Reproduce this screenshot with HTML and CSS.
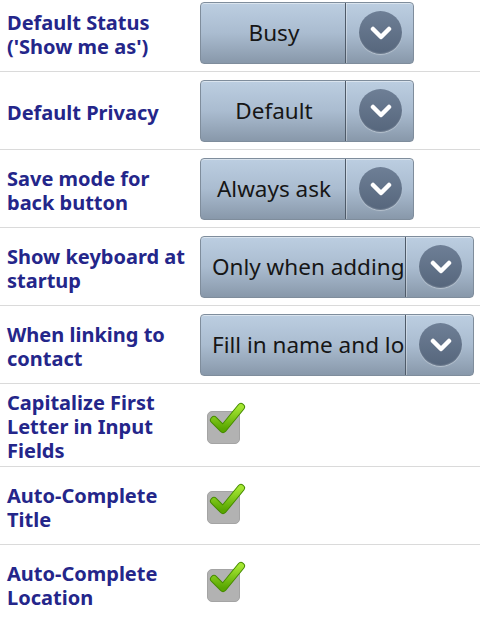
FILE: index.html
```html
<!DOCTYPE html>
<html>
<head>
<meta charset="utf-8">
<link rel="stylesheet" href="styles.css">
</head>
<body>
<div class="list">
  <div class="row">
    <div class="label">Default Status ('Show me as')</div>
    <div class="spinner">
      <div class="spinner-text">Busy</div>
      <div class="spinner-arrow"><span class="circle"><svg width="22" height="14" viewBox="0 0 22 14"><polyline points="3,3 11,11 19,3" fill="none" stroke="#fff" stroke-width="4.5" stroke-linecap="round" stroke-linejoin="round"/></svg></span></div>
    </div>
  </div>
  <div class="row">
    <div class="label">Default Privacy</div>
    <div class="spinner">
      <div class="spinner-text">Default</div>
      <div class="spinner-arrow"><span class="circle"><svg width="22" height="14" viewBox="0 0 22 14"><polyline points="3,3 11,11 19,3" fill="none" stroke="#fff" stroke-width="4.5" stroke-linecap="round" stroke-linejoin="round"/></svg></span></div>
    </div>
  </div>
  <div class="row">
    <div class="label">Save mode for back button</div>
    <div class="spinner">
      <div class="spinner-text">Always ask</div>
      <div class="spinner-arrow"><span class="circle"><svg width="22" height="14" viewBox="0 0 22 14"><polyline points="3,3 11,11 19,3" fill="none" stroke="#fff" stroke-width="4.5" stroke-linecap="round" stroke-linejoin="round"/></svg></span></div>
    </div>
  </div>
  <div class="row">
    <div class="label">Show keyboard at startup</div>
    <div class="spinner wide">
      <div class="spinner-text">Only when adding</div>
      <div class="spinner-arrow"><span class="circle"><svg width="22" height="14" viewBox="0 0 22 14"><polyline points="3,3 11,11 19,3" fill="none" stroke="#fff" stroke-width="4.5" stroke-linecap="round" stroke-linejoin="round"/></svg></span></div>
    </div>
  </div>
  <div class="row">
    <div class="label">When linking to contact</div>
    <div class="spinner wide">
      <div class="spinner-text">Fill in name and location</div>
      <div class="spinner-arrow"><span class="circle"><svg width="22" height="14" viewBox="0 0 22 14"><polyline points="3,3 11,11 19,3" fill="none" stroke="#fff" stroke-width="4.5" stroke-linecap="round" stroke-linejoin="round"/></svg></span></div>
    </div>
  </div>
  <div class="row">
    <div class="label">Capitalize First Letter in Input Fields</div>
    <div class="check">
      <span class="box"></span>
      <svg class="tick" width="42" height="38" viewBox="0 0 42 38"><defs><linearGradient id="g1" x1="0" y1="0" x2="0" y2="1"><stop offset="0" stop-color="#a4e632"/><stop offset="1" stop-color="#58a600"/></linearGradient></defs><polyline points="8,19 17,28 35,6" fill="none" stroke="#458a00" stroke-width="8" stroke-linecap="round" stroke-linejoin="round"/><polyline points="8,19 17,28 35,6" fill="none" stroke="url(#g1)" stroke-width="6" stroke-linecap="round" stroke-linejoin="round"/></svg>
    </div>
  </div>
  <div class="row">
    <div class="label">Auto-Complete Title</div>
    <div class="check">
      <span class="box"></span>
      <svg class="tick" width="42" height="38" viewBox="0 0 42 38"><defs><linearGradient id="g2" x1="0" y1="0" x2="0" y2="1"><stop offset="0" stop-color="#a4e632"/><stop offset="1" stop-color="#58a600"/></linearGradient></defs><polyline points="8,19 17,28 35,6" fill="none" stroke="#458a00" stroke-width="8" stroke-linecap="round" stroke-linejoin="round"/><polyline points="8,19 17,28 35,6" fill="none" stroke="url(#g2)" stroke-width="6" stroke-linecap="round" stroke-linejoin="round"/></svg>
    </div>
  </div>
  <div class="row">
    <div class="label">Auto-Complete Location</div>
    <div class="check">
      <span class="box"></span>
      <svg class="tick" width="42" height="38" viewBox="0 0 42 38"><defs><linearGradient id="g3" x1="0" y1="0" x2="0" y2="1"><stop offset="0" stop-color="#a4e632"/><stop offset="1" stop-color="#58a600"/></linearGradient></defs><polyline points="8,19 17,28 35,6" fill="none" stroke="#458a00" stroke-width="8" stroke-linecap="round" stroke-linejoin="round"/><polyline points="8,19 17,28 35,6" fill="none" stroke="url(#g3)" stroke-width="6" stroke-linecap="round" stroke-linejoin="round"/></svg>
    </div>
  </div>
</div>
</body>
</html>
```

FILE: styles.css
```css
html, body {
  margin: 0;
  padding: 0;
  background: #fff;
  overflow: hidden;
}
body {
  width: 480px;
  height: 620px;
  font-family: "Noto Sans", "Open Sans", sans-serif;
}
.list {
  margin-top: -6px;
}
.row {
  display: flex;
  align-items: center;
  box-sizing: border-box;
  min-height: 78px;
  padding: 3px 6px 3px 7px;
  border-bottom: 1px solid #dadada;
}
.label {
  flex: none;
  width: 186px;
  margin-right: 7px;
  padding-top: 4px;
  color: #24268a;
  font-weight: bold;
  font-size: 20px;
  line-height: 24px;
}
.spinner {
  display: flex;
  width: 214px;
  height: 62px;
  box-sizing: border-box;
  border: 1px solid #7f8d9c;
  border-radius: 4px;
  background: linear-gradient(#bccee1 0%, #aabcd0 50%, #8898aa 100%);
  box-shadow: inset 0 1px 0 rgba(255,255,255,0.45);
  overflow: hidden;
}
.spinner.wide {
  width: 274px;
}
.spinner-text {
  flex: 1;
  min-width: 0;
  display: flex;
  align-items: center;
  justify-content: center;
  font-size: 22.5px;
  color: #161616;
  white-space: nowrap;
  overflow: hidden;
  padding-left: 2px;
}
.wide .spinner-text {
  justify-content: flex-start;
  padding-left: 11px;
}
.spinner-arrow {
  flex: none;
  width: 68px;
  display: flex;
  align-items: center;
  justify-content: center;
  border-left: 1px solid #4e5a68;
  box-shadow: inset 1px 0 0 rgba(255,255,255,0.35);
  padding-left: 2px;
  box-sizing: border-box;
}
.circle {
  width: 43px;
  height: 43px;
  border-radius: 50%;
  background: linear-gradient(#6e7f96, #56667c);
  box-shadow: 0 1px 1px rgba(255,255,255,0.35), inset 0 -1px 1px rgba(255,255,255,0.15);
  display: flex;
  align-items: center;
  justify-content: center;
}
.circle svg {
  display: block;
  margin-top: 1px;
}
.check {
  display: flex;
  position: relative;
  width: 46px;
  height: 40px;
  align-items: center;
}
.box {
  display: block;
  width: 33px;
  height: 33px;
  margin-left: 7px;
  margin-top: 4px;
  box-sizing: border-box;
  border-radius: 5px;
  background: #b2b2b2;
  border: 1px solid #a4a4a4;
}
.tick {
  position: absolute;
  left: 6px;
  top: -4px;
}
```
